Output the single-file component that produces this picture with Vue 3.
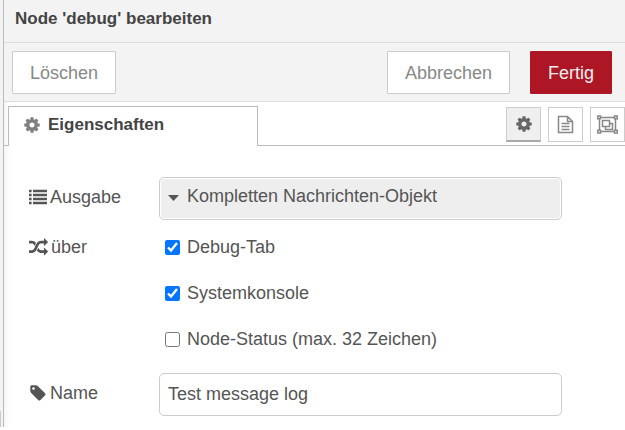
<template>
  <div class="editor">
    <div class="workspace-edge"><div class="edge-footer"></div></div>
    <div class="tray">
      <header class="tray-header">Node 'debug' bearbeiten</header>

      <div class="tray-toolbar">
        <button type="button" class="btn">Löschen</button>
        <div class="btn-group">
          <button type="button" class="btn">Abbrechen</button>
          <button type="button" class="btn btn-primary">Fertig</button>
        </div>
      </div>

      <div class="tab-bar">
        <button type="button" class="tab">
          <svg class="icon" viewBox="0 0 1792 1792"><path :d="icons.cog" /></svg>
          <span>Eigenschaften</span>
        </button>
        <div class="tab-tools">
          <button type="button" class="tool selected" aria-label="Eigenschaften">
            <svg class="icon" viewBox="0 0 1792 1792"><path :d="icons.cog" /></svg>
          </button>
          <button type="button" class="tool" aria-label="Beschreibung">
            <svg class="line-icon" width="17" height="19" viewBox="0 0 17 19">
              <path d="M1.500 1.500h9l5 5v11h-14z M10.500 1.500v5h5 M4.500 8.500h8 M4.500 11.500h8 M4.500 14.500h8" />
            </svg>
          </button>
          <button type="button" class="tool" aria-label="Darstellung">
            <svg class="line-icon" width="21" height="19" viewBox="0 0 21 19">
              <path d="M3.500 2.500h14 M3.500 16.500h14 M2.500 3.500v12 M18.500 3.500v12" />
              <path d="M.8 1h2.700v2.700H.8z M17.500 1h2.700v2.700h-2.700z M.8 15.300h2.700V18H.8z M17.500 15.300h2.700V18h-2.700z" />
              <path d="M5.500 5.500h7v6h-7z M12.500 8.500h3v6h-7v-3" />
            </svg>
          </button>
        </div>
      </div>

      <form class="form" @submit.prevent>
        <div class="form-row">
          <label class="row-label" for="output">
            <svg class="icon-list" viewBox="0 0 18 16">
              <path d="M0 .7h2.600v2.600H0z M4 .7h14v2.600H4z M0 4.700h2.600v2.600H0z M4 4.700h14v2.600H4z M0 8.700h2.600v2.600H0z M4 8.700h14v2.600H4z M0 12.700h2.600v2.600H0z M4 12.700h14v2.600H4z" />
            </svg>
            Ausgabe
          </label>
          <div class="select-wrap">
            <svg class="caret" viewBox="0 0 11 6"><path d="M0 0h11L5.500 6z" /></svg>
            <select id="output" v-model="output" class="field select">
              <option value="full">Kompletten Nachrichten-Objekt</option>
            </select>
          </div>
        </div>

        <div class="form-row targets-row">
          <div id="targets" class="row-label">
            <svg class="icon-random" viewBox="0 0 1792 1792"><path :d="icons.random" /></svg>
            über
          </div>
          <div class="targets" role="group" aria-labelledby="targets">
            <label v-for="t in targets" :key="t.id" class="target">
              <input type="checkbox" v-model="t.checked">
              <span>{{ t.label }}</span>
            </label>
          </div>
        </div>

        <div class="form-row">
          <label class="row-label" for="name">
            <svg class="icon" viewBox="0 0 1792 1792"><path :d="icons.tag" /></svg>
            Name
          </label>
          <input id="name" v-model="name" type="text" class="field">
        </div>
      </form>
    </div>
  </div>
</template>

<script setup>
import { ref } from 'vue'

const output = ref('full')
const name = ref('Test message log')
const targets = ref([
  { id: 'tab', label: 'Debug-Tab', checked: true },
  { id: 'console', label: 'Systemkonsole', checked: true },
  { id: 'status', label: 'Node-Status (max. 32 Zeichen)', checked: false },
])

const icons = {
  cog: 'M1152 896q0-106-75-181t-181-75-181 75-75 181 75 181 181 75 181-75 75-181zm512-109v222q0 12-8 23t-20 13l-185 28q-19 54-39 91 35 50 107 138 10 12 10 25t-9 23q-27 37-99 108t-94 71q-12 0-26-9l-138-108q-44 23-91 38-16 136-29 186-7 28-36 28h-222q-14 0-24.500-8.500t-11.500-21.500l-28-184q-49-16-90-37l-141 107q-10 9-25 9-14 0-25-11-126-114-165-168-7-10-7-23 0-12 8-23 15-21 51-66.500t54-70.500q-27-50-41-99l-183-27q-13-2-21-12.500t-8-23.500v-222q0-12 8-23t19-13l186-28q14-46 39-92-40-57-107-138-10-12-10-24 0-10 9-23 26-36 98.500-107.500t94.500-71.500q13 0 26 10l138 107q44-23 91-38 16-136 29-186 7-28 36-28h222q14 0 24.500 8.500t11.500 21.500l28 184q49 16 90 37l142-107q9-9 24-9 13 0 25 10 129 119 165 170 7 8 7 22 0 12-8 23-15 21-51 66.500t-54 70.500q26 50 41 98l183 28q13 2 21 12.500t8 23.500z',
  random: 'M666 481q-60 92-137 273-22-45-37-72.500t-40.500-63.500-51-56.500-63-35-81.500-14.500h-224q-14 0-23-9t-9-23v-192q0-14 9-23t23-9h224q250 0 410 225zm1126 799q0 14-9 23l-320 320q-9 9-23 9-13 0-22.500-9.500t-9.500-22.500v-192q-32 0-85 .5t-81 1-73-1-71-5-64-10.500-63-18.500-58-28.500-59-40-55-53.500-56-69.500q59-93 136-273 22 45 37 72.500t40.500 63.500 51 56.500 63 35 81.500 14.500h256v-192q0-14 9-23t23-9q12 0 24 10l319 319q9 9 9 23zm0-896q0 14-9 23l-320 320q-9 9-23 9-13 0-22.500-9.500t-9.500-22.500v-192h-256q-48 0-87 15t-69 45-51 61.500-45 77.500q-32 62-78 171-29 66-49.500 111t-54 105-64 100-74 83-90 68.500-106.500 42-128 16.500h-224q-14 0-23-9t-9-23v-192q0-14 9-23t23-9h224q48 0 87-15t69-45 51-61.500 45-77.500q32-62 78-171 29-66 49.500-111t54-105 64-100 74-83 90-68.500 106.500-42 128-16.500h256v-192q0-14 9-23t23-9q12 0 24 10l319 319q9 9 9 23z',
  tag: 'M576 448q0-53-37.500-90.500t-90.500-37.500-90.500 37.500-37.500 90.500 37.500 90.500 90.500 37.500 90.500-37.500 37.500-90.500zm1067 576q0 53-37 90l-491 492q-39 37-91 37-53 0-90-37l-715-716q-38-37-64.500-101t-26.500-117v-416q0-52 38-90t90-38h416q53 0 117 26.500t102 64.500l715 714q37 39 37 91z',
}
</script>

<style>
body { background: #fff; }
</style>

<style scoped>
.editor, .editor * { box-sizing: border-box; }
.editor { display: flex; font: 18px/24px "Liberation Sans", Arial, sans-serif; color: #555; }
.editor button, .editor input, .editor select { font: inherit; margin: 0; }
svg { flex: none; display: block; fill: currentColor; }

.workspace-edge { width: 3px; background: #f3f3f3; display: flex; align-items: flex-end; }
.edge-footer { width: 1px; height: 16px; background: #ccc; }
.tray { flex: 1; min-width: 0; border-left: 1px solid #bbb; background: linear-gradient(to right, #f5f5f5, #fff 6px); }

.tray-header { padding: 7px 11px 11px; background: #f3f3f3; border-bottom: 1px solid #ddd; font-size: 17px; font-weight: bold; color: #444; }
.tray-toolbar {
  display: flex; justify-content: space-between; align-items: center;
  padding: 8px 13px 7px 8px; background: #f3f3f3; border-bottom: 1px solid #ddd;
}
.btn-group { display: flex; gap: 20px; }
.btn { height: 43px; padding: 0 17px; background: #fff; border: 1px solid #ccc; border-radius: 1px; color: #888; }
.btn.btn-primary { background: #ad1625; border-color: #ad1625; color: #eee; }

.tab-bar { display: flex; justify-content: space-between; padding: 4px 0 0 4px; box-shadow: inset 0 -1px #bbb; }
.tab {
  display: flex; align-items: center; gap: 7px; width: 250px; height: 40px; padding: 0 14px 3px;
  background: #fff; border: 1px solid #bbb; border-bottom: 0; color: #444;
}
.editor .tab { font-size: 17px; font-weight: bold; }
.tab .icon { color: #808080; }
.tab-tools { display: flex; gap: 7px; padding-top: 1px; }
.tool {
  display: flex; align-items: center; justify-content: center; width: 35px; height: 35px;
  padding: 0; background: #fff; border: 1px solid #ccc; color: #888;
}
.tool.selected { background: #efefef; border-bottom: 2px solid #aaa; color: #666; }
.icon { width: 18px; height: 18px; }
.line-icon { fill: none; stroke: currentColor; stroke-width: 1.5; }

.form { display: flex; flex-direction: column; padding: 31px 24px 11px; }
.form-row { display: flex; align-items: center; }
.row-label { display: flex; align-items: center; gap: 3px; width: 131px; flex: none; padding: 0 0 4px 1px; }
.icon-list { width: 18px; height: 16px; }
.icon-random { width: 19px; height: 19px; }
.field {
  width: 100%; max-width: 403px; height: 43px; padding: 0 8px;
  background: #fff; border: 1px solid #ccc; border-radius: 5px; color: #555;
}
.select-wrap { position: relative; width: 100%; max-width: 403px; }
.select { display: block; appearance: none; padding: 0 27px 5px; background: #eee; box-shadow: inset 0 0 0 1px #fff; }
.caret { position: absolute; left: 9px; top: 18px; width: 11px; height: 6px; }

.targets-row { align-items: flex-start; padding: 15px 0 22px; }
.targets { display: flex; flex-direction: column; gap: 22px; }
.target { display: flex; align-items: center; gap: 7px; padding-left: 6px; }
.target input { width: 15px; height: 15px; }
</style>
